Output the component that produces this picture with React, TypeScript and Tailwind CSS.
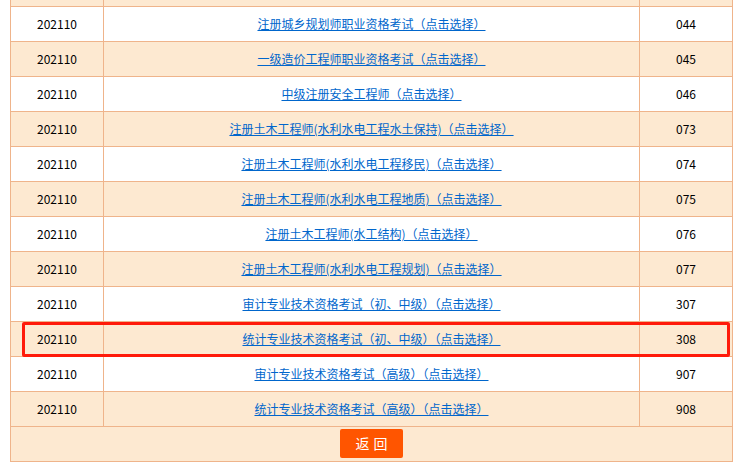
import React from "react";

const rows: { name: string; code: string }[] = [
  { name: "注册城乡规划师职业资格考试（点击选择）", code: "044" },
  { name: "一级造价工程师职业资格考试（点击选择）", code: "045" },
  { name: "中级注册安全工程师（点击选择）", code: "046" },
  { name: "注册土木工程师(水利水电工程水土保持)（点击选择）", code: "073" },
  { name: "注册土木工程师(水利水电工程移民)（点击选择）", code: "074" },
  { name: "注册土木工程师(水利水电工程地质)（点击选择）", code: "075" },
  { name: "注册土木工程师(水工结构)（点击选择）", code: "076" },
  { name: "注册土木工程师(水利水电工程规划)（点击选择）", code: "077" },
  { name: "审计专业技术资格考试（初、中级）（点击选择）", code: "307" },
  { name: "统计专业技术资格考试（初、中级）（点击选择）", code: "308" },
  { name: "审计专业技术资格考试（高级）（点击选择）", code: "907" },
  { name: "统计专业技术资格考试（高级）（点击选择）", code: "908" },
];

export default function App() {
  return (
    <div
      className="relative w-[748px] h-[473px] bg-white overflow-hidden text-[12px] text-black"
      style={{ fontFamily: '"Noto Sans CJK SC", "Liberation Sans", sans-serif' }}
    >
      <div className="ml-[10px] w-[723px] border-x border-[#efb48b]">
        <div className="flex h-[7px] bg-[#fde9d1] border-b border-[#efb48b]">
          <div className="w-[93px] border-r border-[#efb48b]" />
          <div className="w-[536px] border-r border-[#efb48b]" />
          <div className="flex-1" />
        </div>
        {rows.map((r, i) => (
          <div
            key={r.code}
            className={`flex h-[35px] border-b border-[#efb48b] ${i % 2 === 0 ? "bg-white" : "bg-[#fde9d1]"}`}
          >
            <div className="w-[93px] border-r border-[#efb48b] flex items-center justify-center">
              202110
            </div>
            <div className="w-[536px] border-r border-[#efb48b] flex items-center justify-center">
              <a href="#" className="text-[#0066cc] underline leading-none">
                {r.name}
              </a>
            </div>
            <div className="flex-1 flex items-center justify-center">{r.code}</div>
          </div>
        ))}
        <div className="h-[35px] bg-[#fde9d1] border-b border-[#efb48b] flex justify-center pt-[2px]">
          <button className="w-[63px] h-[29px] bg-[#ff5500] text-white text-[14px] rounded-[2px] tracking-[4px] pl-[4px]">
            返回
          </button>
        </div>
      </div>
      <div className="absolute left-[22px] top-[322px] w-[708px] h-[35px] border-[3px] border-[#ff1a0a] rounded-[2px] pointer-events-none" />
    </div>
  );
}
